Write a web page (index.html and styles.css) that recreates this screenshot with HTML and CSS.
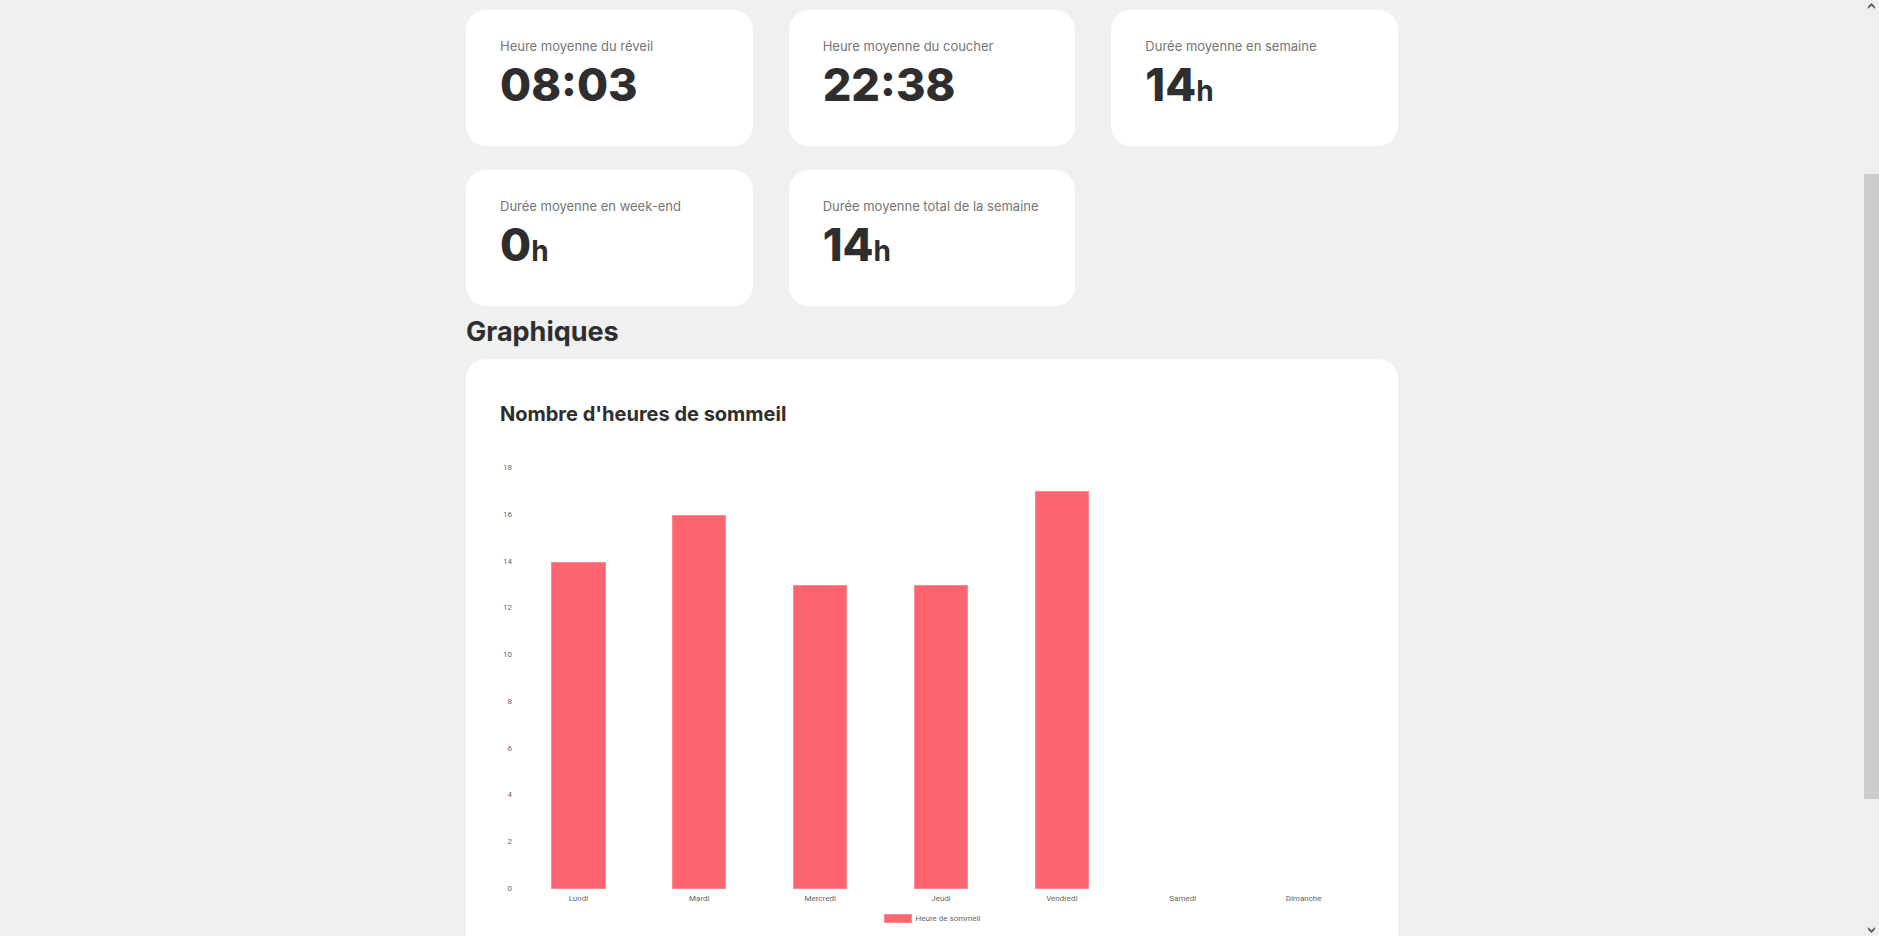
FILE: index.html
```html
<!DOCTYPE html>
<html lang="fr">
<head>
<meta charset="utf-8">
<title>Statistiques de sommeil</title>
<link rel="stylesheet" href="styles.css">
</head>
<body>
<div class="viewport">
  <main class="page">
    <div class="content">
      <section class="stats">
        <article class="card stat"><p class="stat-label">Heure moyenne du réveil</p><p class="stat-value">08:03</p></article>
        <article class="card stat"><p class="stat-label">Heure moyenne du coucher</p><p class="stat-value">22:38</p></article>
        <article class="card stat"><p class="stat-label">Durée moyenne en semaine</p><p class="stat-value">14<span class="unit">h</span></p></article>
        <article class="card stat"><p class="stat-label">Durée moyenne en week-end</p><p class="stat-value">0<span class="unit">h</span></p></article>
        <article class="card stat"><p class="stat-label">Durée moyenne total de la semaine</p><p class="stat-value">14<span class="unit">h</span></p></article>
      </section>
      <h2 class="section-title">Graphiques</h2>
      <section class="card chart-card">
        <h3 class="chart-title">Nombre d'heures de sommeil</h3>
        <div class="chart">
          <div class="axis-y">
            <span>18</span><span>16</span><span>14</span><span>12</span><span>10</span><span>8</span><span>6</span><span>4</span><span>2</span><span>0</span>
          </div>
          <div class="plot">
            <div class="slot"><div class="bar" style="height:77.78%"></div></div>
            <div class="slot"><div class="bar" style="height:88.89%"></div></div>
            <div class="slot"><div class="bar" style="height:72.22%"></div></div>
            <div class="slot"><div class="bar" style="height:72.22%"></div></div>
            <div class="slot"><div class="bar" style="height:94.44%"></div></div>
            <div class="slot"></div>
            <div class="slot"></div>
          </div>
          <div class="axis-x">
            <span>Lundi</span><span>Mardi</span><span>Mercredi</span><span>Jeudi</span><span>Vendredi</span><span>Samedi</span><span>Dimanche</span>
          </div>
        </div>
        <div class="legend"><span class="swatch"></span><span>Heure de sommeil</span></div>
      </section>
    </div>
  </main>
  <div class="scrollbar" aria-hidden="true">
    <svg class="arrow" viewBox="0 0 7 6"><path d="M0 6V3.500L3.500 0L7 3.500V6L3.500 2.800Z"/></svg>
    <div class="track"><div class="thumb"></div></div>
    <svg class="arrow" viewBox="0 0 7 6"><path d="M0 0V2.500L3.500 6L7 2.500V0L3.500 3.200Z"/></svg>
  </div>
</div>
</body>
</html>
```

FILE: styles.css
```css
* { box-sizing: border-box; }

body {
  margin: 0;
  background: #f0f0f0;
  color: #2e2e2e;
  font-family: Inter, "Liberation Sans", sans-serif;
}

h2, h3, p { margin: 0; }

.viewport {
  display: flex;
  height: 100vh;
  overflow: hidden;
}

.page {
  flex: 1;
  overflow: hidden;
}

.content {
  width: 50%;
  min-width: 640px;
  margin: 0 auto;
  padding-top: 10px;
}

.card {
  background: #fff;
  border-radius: 20px;
}

.stats {
  display: grid;
  grid-template-columns: repeat(3, 1fr);
  gap: 24px 36px;
}

.stat { padding: 26px 34px 32px; }

.stat-label {
  font-size: 13px;
  line-height: 20px;
  color: #757575;
  white-space: nowrap;
}

.stat-value {
  font-size: 45px;
  font-weight: 800;
  line-height: 58px;
}

.unit {
  font-size: 28px;
  font-weight: 700;
  line-height: 1;
}

.section-title {
  margin: 8px 0 9px;
  font-size: 27px;
  font-weight: 700;
  line-height: 36px;
}

.chart-card { padding: 43px 34px; }

.chart-title {
  margin-bottom: 42px;
  font-size: 20px;
  font-weight: 700;
  line-height: 24px;
}

.chart {
  display: grid;
  grid-template-columns: 12px 1fr;
  column-gap: 6px;
  font-family: Roboto, sans-serif;
  font-size: 8px;
  line-height: 10px;
  color: #666;
}

.axis-y {
  display: flex;
  flex-direction: column;
  justify-content: space-between;
  margin: -5px 0;
  text-align: right;
}

.plot {
  display: flex;
  aspect-ratio: 2.01;
}

.slot {
  display: flex;
  flex: 1;
  align-items: flex-end;
  justify-content: center;
}

.bar {
  width: 45%;
  background: #ff6570;
  border: 1px solid #ff8790;
}

.axis-x {
  display: flex;
  grid-column: 2;
  margin-top: 5px;
}

.axis-x span {
  flex: 1;
  text-align: center;
}

.legend {
  display: flex;
  align-items: center;
  justify-content: center;
  gap: 4px;
  margin-top: 10px;
  font-family: Roboto, sans-serif;
  font-size: 8px;
  line-height: 10px;
  color: #666;
}

.swatch {
  width: 28px;
  height: 9px;
  background: #ff6570;
  border: 1px solid #ff8790;
}

.scrollbar {
  display: flex;
  flex-direction: column;
  align-items: center;
  width: 15px;
  padding: 3px 0;
  background: #efefef;
}

.arrow {
  width: 7px;
  height: 6px;
  fill: #606060;
}

.track {
  display: flex;
  flex: 1;
  flex-direction: column;
  width: 100%;
  padding-top: 165px;
}

.thumb {
  height: 83%;
  background: #cdcdcd;
}
```
